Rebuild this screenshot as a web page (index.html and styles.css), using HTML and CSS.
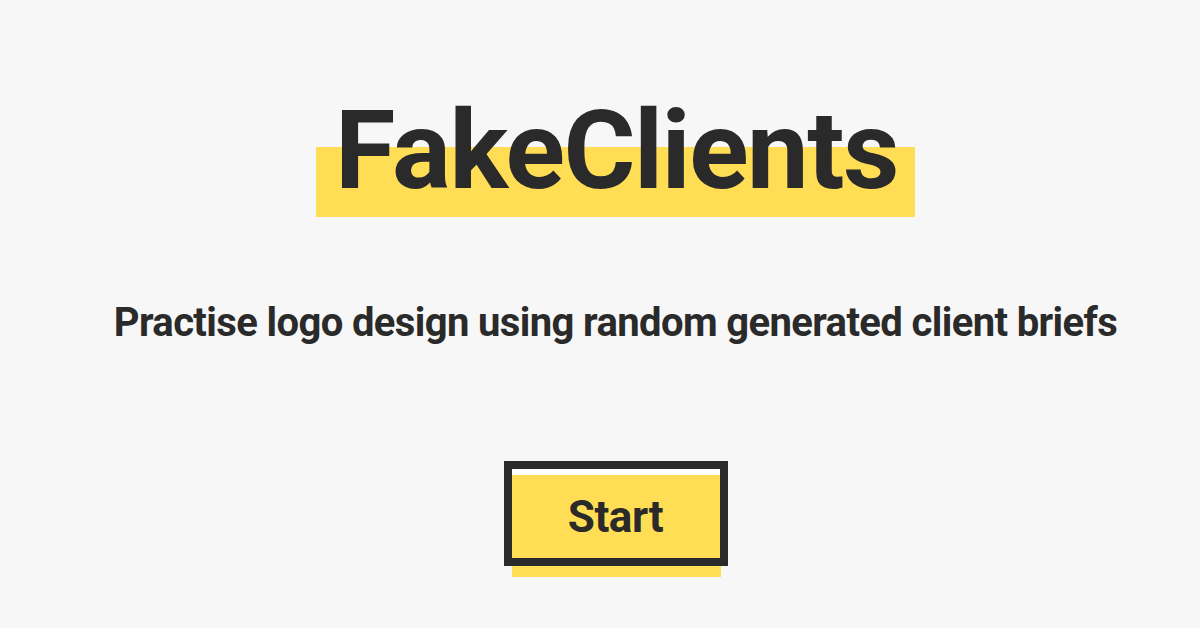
FILE: index.html
```html
<!DOCTYPE html>
<html lang="en">
<head>
<meta charset="utf-8">
<title>FakeClients</title>
<link rel="stylesheet" href="styles.css">
</head>
<body>
<main class="page">
  <h1 class="title">FakeClients</h1>
  <p class="tagline">Practise logo design using random generated client briefs</p>
  <button class="btn" type="button">Start</button>
</main>
</body>
</html>
```
FILE: styles.css
```css
html, body {
  margin: 0;
  padding: 0;
}
body {
  background: #f7f7f7;
  color: #2a2a2a;
  font-family: Roboto, "Liberation Sans", sans-serif;
}
.page {
  width: 1200px;
  height: 628px;
  display: flex;
  flex-direction: column;
  align-items: center;
  padding: 85px 0 0 31px;
  box-sizing: border-box;
  overflow: hidden;
}
.title {
  margin: 0;
  font-size: 110px;
  font-weight: 700;
  letter-spacing: -1.5px;
  line-height: 132px;
  padding: 0 17px 0 19px;
  background: linear-gradient(#ffde55, #ffde55) left bottom / 100% 70px no-repeat;
}
.tagline {
  margin: 82px 0 0;
  font-size: 40px;
  font-weight: 700;
  letter-spacing: -0.62px;
  line-height: normal;
}
.btn {
  position: relative;
  margin-top: 115px;
  width: 224px;
  height: 105px;
  box-sizing: border-box;
  border: 8px solid #2a2a2a;
  background: linear-gradient(#ffffff 0 6px, #ffde55 6px);
  color: #2a2a2a;
  font-family: Roboto, "Liberation Sans", sans-serif;
  font-size: 44px;
  font-weight: 700;
  letter-spacing: -0.4px;
  padding: 6px 0 0;
  display: flex;
  align-items: center;
  justify-content: center;
  cursor: pointer;
}
.btn::after {
  content: "";
  position: absolute;
  left: 0;
  right: -1px;
  bottom: -19px;
  height: 11px;
  background: #ffde55;
}
```
